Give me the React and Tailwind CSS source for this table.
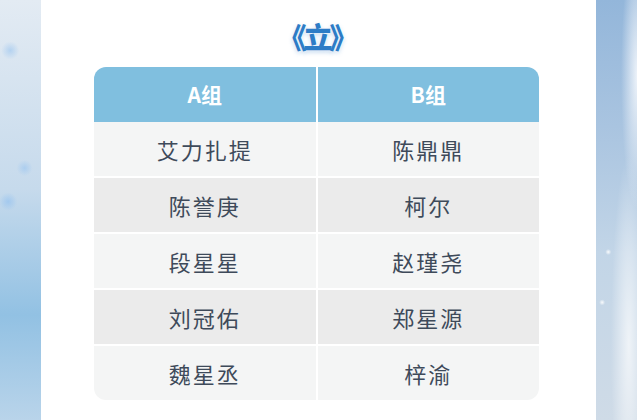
import React from 'react';

const ROWS = [
  ['艾力扎提', '陈鼎鼎'],
  ['陈誉庚', '柯尔'],
  ['段星星', '赵瑾尧'],
  ['刘冠佑', '郑星源'],
  ['魏星丞', '梓渝'],
];

export default function App() {
  return (
    <div
      className="w-[637px] h-[420px] flex bg-white overflow-hidden"
      style={{ fontFamily: '"Noto Sans CJK SC", "Noto Sans", sans-serif' }}
    >
      {/* left textured strip */}
      <div className="w-[41px] h-full bg-[radial-gradient(circle_at_25%_12%,rgba(170,205,240,0.8)_0,transparent_9px),radial-gradient(circle_at_60%_40%,rgba(160,200,240,0.7)_0,transparent_8px),radial-gradient(circle_at_20%_48%,rgba(150,195,240,0.7)_0,transparent_9px),linear-gradient(to_bottom,#e3ebf3,#c6daec_45%,#92c1e3_75%,#b9d4ea)]" />

      <div className="flex-1 flex flex-col items-center pr-[4px]">
        <div className="h-[67px] flex items-center justify-center pt-[6px]">
          <span
            className="text-[29px] font-black text-[#2d7cc6] tracking-[-3px] leading-none"
            style={{ textShadow: '0 0 2px #fff, 0 2px 4px rgba(120,170,220,0.45)' }}
          >
            《立》
          </span>
        </div>

        <div className="w-[445px] rounded-[12px] overflow-hidden">
          <div className="grid grid-cols-2 gap-x-[2px] bg-white">
            <div className="h-[55px] bg-[#80bfdf] flex items-center justify-center text-white text-[21px] font-bold">
              A组
            </div>
            <div className="h-[55px] bg-[#80bfdf] flex items-center justify-center text-white text-[21px] font-bold">
              B组
            </div>
          </div>
          <div className="flex flex-col gap-y-[2px] bg-white">
            {ROWS.map((r, i) => (
              <div key={i} className="grid grid-cols-2 gap-x-[2px]">
                {r.map((name, j) => (
                  <div
                    key={j}
                    className={`h-[54px] flex items-center justify-center text-[22px] text-[#3e4a5a] tracking-[2px] ${
                      i % 2 === 0 ? 'bg-[#f4f5f5]' : 'bg-[#ebebeb]'
                    }`}
                  >
                    {name}
                  </div>
                ))}
              </div>
            ))}
          </div>
        </div>
      </div>

      {/* right textured strip */}
      <div className="w-[41px] h-full bg-[radial-gradient(ellipse_at_100%_18%,rgba(245,248,252,0.9)_0,transparent_16px),radial-gradient(circle_at_30%_60%,rgba(255,255,255,0.9)_0,transparent_3px),radial-gradient(circle_at_15%_72%,rgba(255,255,255,0.9)_0,transparent_3px),radial-gradient(ellipse_at_80%_82%,rgba(255,255,255,0.7)_0,transparent_18px),linear-gradient(to_bottom,#93b6da,#a9c4e0_30%,#c2d5e7_60%,#cfdbe7)]" />
    </div>
  );
}
